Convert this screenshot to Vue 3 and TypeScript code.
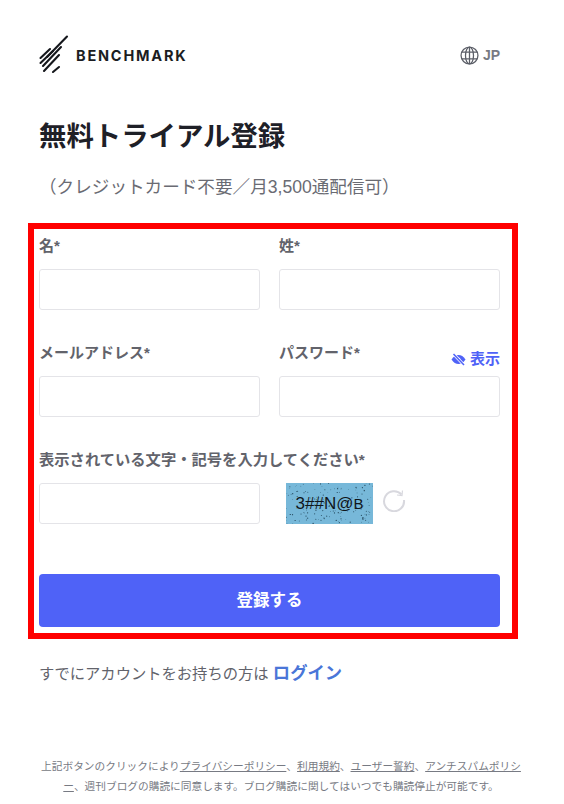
<script setup lang="ts">
interface Dot { x: number; y: number; r: number }
let seed = 7;
const rnd = (): number => {
  seed = (seed * 16807) % 2147483647;
  return seed / 2147483647;
};
const dots: Dot[] = Array.from({ length: 150 }, () => ({
  x: rnd() * 87,
  y: rnd() * 41,
  r: 0.25 + rnd() * 0.4,
}));
</script>

<template>
  <div class="page">
    <header class="top">
      <div class="logo">
        <svg class="mark" width="32" height="40" viewBox="0 0 32 40" fill="none" stroke="#15171c" stroke-width="2.100" stroke-linecap="round">
          <path d="M28 1.500 8 22" />
          <path d="M11 14 1.500 23" />
          <path d="M14 16 1.500 28" />
          <path d="M22 12 4 31" />
          <path d="M20 20 5 36" />
          <path d="M20 32 14 37" />
        </svg>
        <span class="word">BENCHMARK</span>
      </div>
      <div class="lang">
        <svg width="19" height="19" viewBox="0 0 18 18" fill="none" stroke="#5c5f68" stroke-width="1.200">
          <circle cx="9" cy="9" r="8" />
          <ellipse cx="9" cy="9" rx="3.800" ry="8" />
          <path d="M9 1v16M1.800 5.800h14.400M1.800 12.200h14.400" />
        </svg>
        <span>JP</span>
      </div>
    </header>

    <h1>無料トライアル登録</h1>
    <p class="sub">（クレジットカード不要／月3,500通配信可）</p>

    <form class="box" @submit.prevent>
      <div class="row first">
        <div class="field">
          <label>名*</label>
          <input type="text" />
        </div>
        <div class="field">
          <label>姓*</label>
          <input type="text" />
        </div>
      </div>
      <div class="row second">
        <div class="field">
          <label>メールアドレス*</label>
          <input type="text" />
        </div>
        <div class="field">
          <div class="pw-head">
            <label>パスワード*</label>
            <span class="show">
              <svg width="15" height="13" viewBox="0 0 15 13" fill="none">
                <path d="M.5 6.500C2.500 3.300 4.800 2 7.500 2S12.500 3.300 14.500 6.500C12.500 9.700 10.200 11 7.500 11S2.500 9.700.5 6.500Z" fill="#4f62f7" />
                <circle cx="8" cy="6" r="1.300" fill="#fff" />
                <path d="M2.500 1 13 12" stroke="#fff" stroke-width="3" />
                <path d="M2.500 1 13 12" stroke="#4f62f7" stroke-width="1.500" />
              </svg>
              表示
            </span>
          </div>
          <input type="text" />
        </div>
      </div>
      <div class="captcha">
        <label>表示されている文字・記号を入力してください*</label>
        <div class="captcha-row">
          <input type="text" />
          <div class="code">
            <svg class="noise" width="87" height="41" viewBox="0 0 87 41">
              <circle v-for="(d, i) in dots" :key="i" :cx="d.x" :cy="d.y" :r="d.r" fill="#24485c" />
            </svg>
            <span>3##N@<small>B</small></span>
          </div>
          <svg class="reload" width="24" height="24" viewBox="0 0 24 24" fill="none" stroke="#d8d8de" stroke-width="2">
            <path d="M19.500 6.500A10 10 0 1 0 22 12" />
            <path d="M20.500 2.500 20 7.500 15 7" stroke-width="1.200" />
          </svg>
        </div>
      </div>
      <button type="submit">登録する</button>
    </form>

    <p class="login">すでにアカウントをお持ちの方は <a>ログイン</a></p>

    <p class="legal">上記ボタンのクリックにより<u>プライバシーポリシー</u>、<u>利用規約</u>、<u>ユーザー誓約</u>、<u>アンチスパムポリシー</u>、週刊ブログの購読に同意します。ブログ購読に関してはいつでも購読停止が可能です。</p>
  </div>
</template>

<style>
html, body {
  margin: 0;
  background: #fff;
  overflow: hidden;
}
</style>

<style scoped>
.page {
  width: 564px;
  height: 804px;
  overflow: hidden;
  box-sizing: border-box;
  font-family: "Liberation Sans", "Noto Sans CJK JP", sans-serif;
  color: #5f6068;
}
.top {
  display: flex;
  justify-content: space-between;
  align-items: center;
  margin: 0 64px 0 39px;
  padding-top: 33px;
  height: 44px;
}
.logo {
  display: flex;
  align-items: center;
  gap: 5px;
}
.mark {
  display: block;
}
.word {
  font-family: "Inter", sans-serif;
  font-weight: 700;
  font-size: 14.500px;
  letter-spacing: 1.800px;
  color: #1b1d22;
}
.lang {
  display: flex;
  align-items: center;
  gap: 4px;
  font-size: 14px;
  font-weight: 700;
  color: #777a83;
}
h1 {
  margin: 42px 0 0 39px;
  font-size: 27.400px;
  line-height: 36px;
  font-weight: 700;
  color: #1e2027;
}
.sub {
  margin: 19px 0 0 39px;
  font-size: 17.600px;
  line-height: 26px;
  color: #6a6b73;
}
.box {
  box-sizing: border-box;
  width: 490px;
  height: 416px;
  margin: 23px 0 0 28px;
  padding: 0 12px 0 5px;
  border: 6px solid #ff0000;
  display: flex;
  flex-direction: column;
}
label {
  display: block;
  font-size: 15px;
  line-height: 20px;
  font-weight: 700;
  color: #62636b;
}
input {
  display: block;
  box-sizing: border-box;
  width: 221px;
  height: 41px;
  border: 1px solid #e4e4e8;
  border-radius: 3px;
  background: #fff;
  outline: none;
}
.row {
  display: flex;
  gap: 19px;
}
.first {
  margin-top: 7px;
}
.first label {
  margin-bottom: 13px;
}
.second {
  margin-top: 33px;
}
.second .field > label {
  margin-bottom: 13px;
}
.pw-head {
  position: relative;
  height: 33px;
}
.show {
  position: absolute;
  right: 0;
  top: 6px;
  display: flex;
  align-items: center;
  gap: 4px;
  font-size: 15px;
  line-height: 20px;
  font-weight: 700;
  color: #4f62f7;
}
.captcha {
  margin-top: 33px;
}
.captcha label {
  font-size: 15.300px;
  margin-bottom: 13px;
}
.captcha-row {
  display: flex;
  align-items: center;
}
.code {
  position: relative;
  width: 87px;
  height: 41px;
  margin-left: 26px;
  background: #77b8d9;
  display: flex;
  align-items: center;
  justify-content: center;
  overflow: hidden;
  font-size: 17px;
  color: #10161b;
}
.code small {
  font-size: 15px;
}
.noise {
  position: absolute;
  left: 0;
  top: 0;
}
.code span {
  position: relative;
}
.reload {
  margin-left: 9px;
  margin-top: -8px;
}
button {
  display: block;
  width: 461px;
  height: 53px;
  margin-top: 50px;
  padding: 0 0 3px;
  border: 0;
  border-radius: 4px;
  background: #4f62f7;
  color: #fff;
  font: 700 16.500px "Liberation Sans", "Noto Sans CJK JP", sans-serif;
}
.login {
  margin: 22px 0 0 39px;
  font-size: 15.300px;
  line-height: 24px;
  color: #62636b;
}
.login a {
  font-size: 17.300px;
  font-weight: 700;
  color: #4a76d8;
}
.legal {
  width: 484px;
  margin: 70px 0 0 39px;
  font-size: 10.700px;
  line-height: 20px;
  text-align: center;
  line-break: anywhere;
  color: #777a83;
}
</style>
